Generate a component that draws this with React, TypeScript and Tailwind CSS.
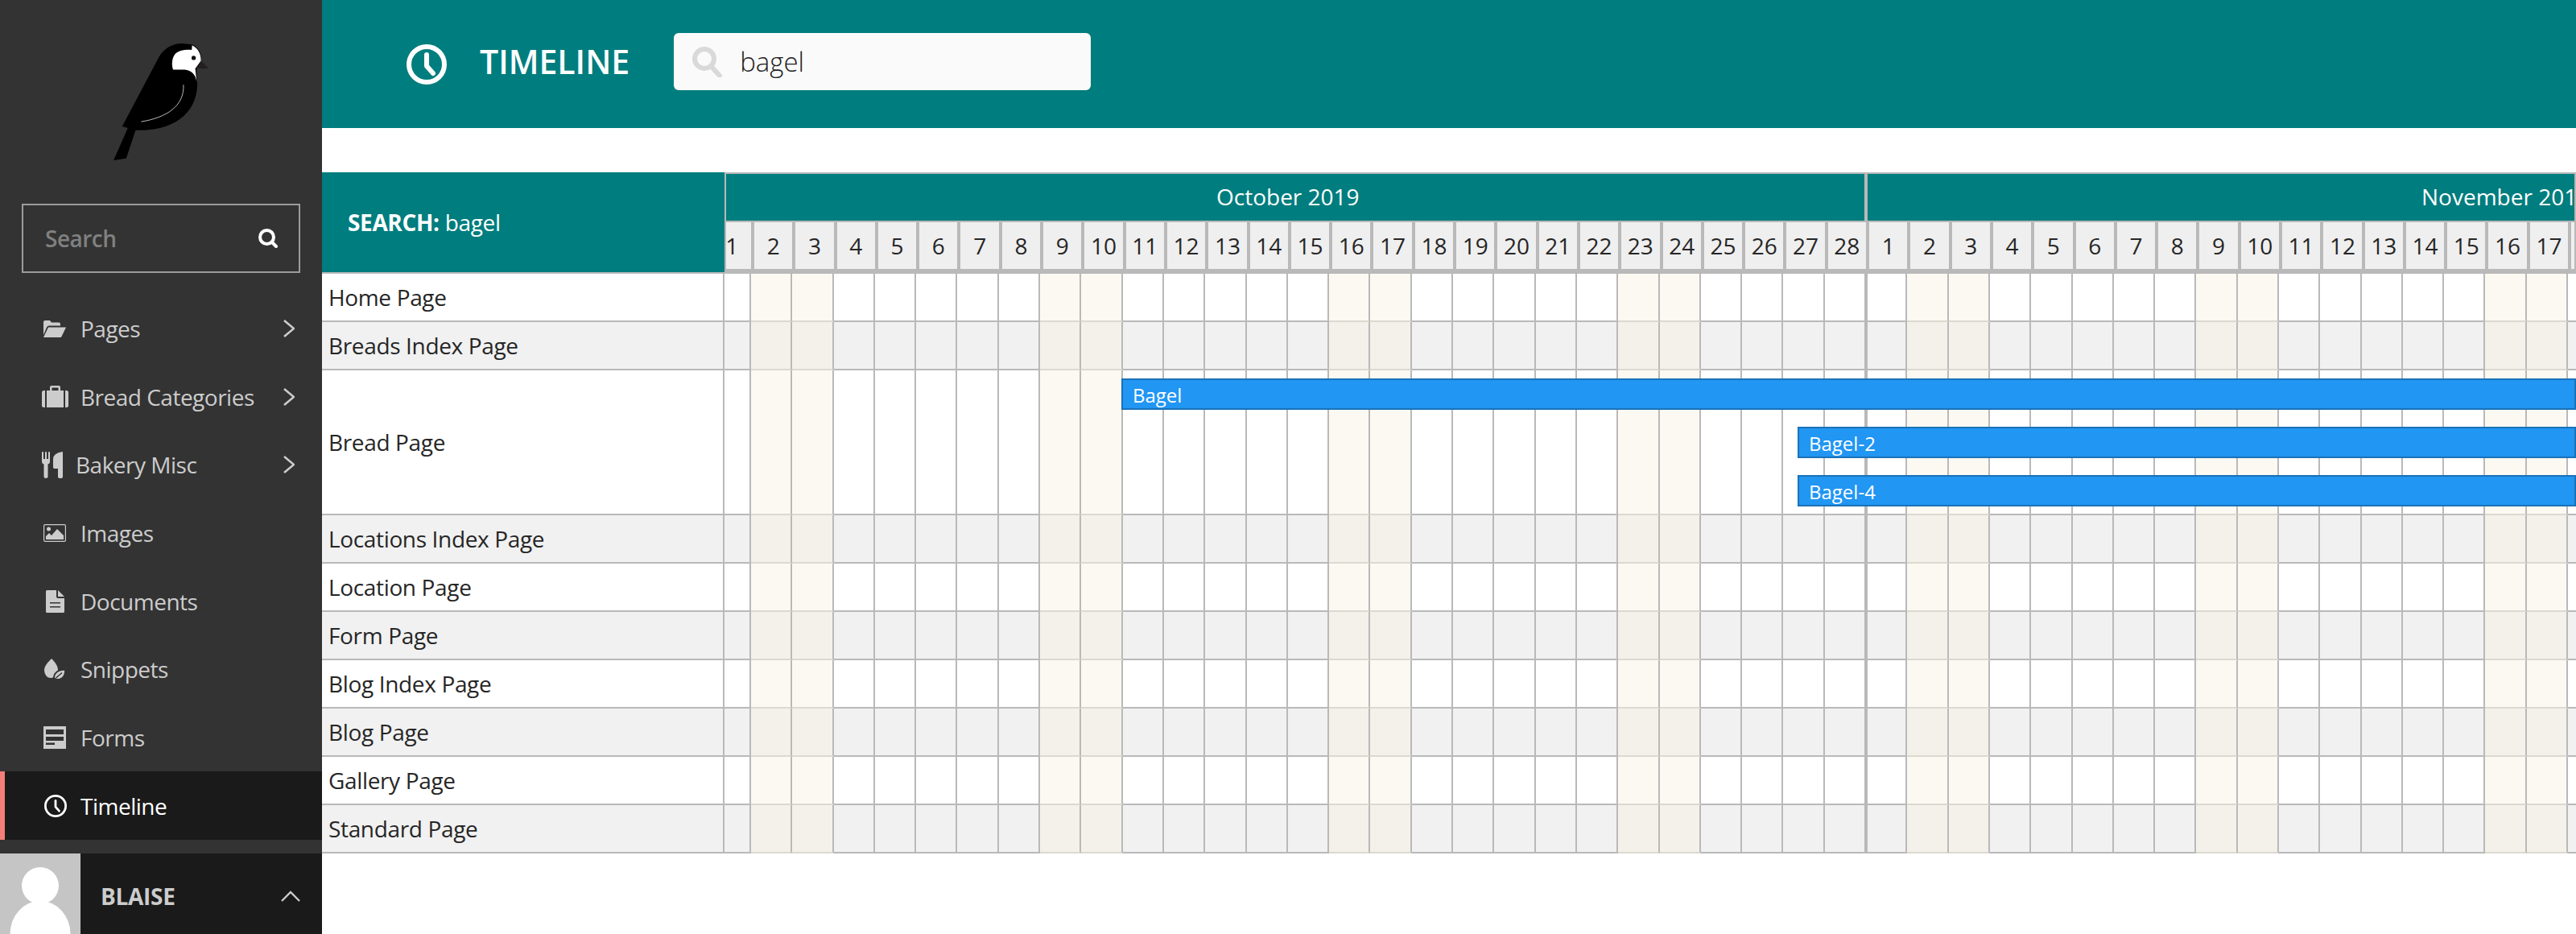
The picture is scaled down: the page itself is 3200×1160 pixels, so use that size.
import React from "react";

const GRAY = "border-[#b9b9b9]";

const oct = Array.from({ length: 28 }, (_, i) => i + 1);
const nov = Array.from({ length: 18 }, (_, i) => i + 1);
const isWeekend = (d: number) => [2, 3, 9, 10, 16, 17, 23, 24].includes(d);
const days = [...oct.map((d) => ({ d, m: 10 })), ...nov.map((d) => ({ d, m: 11 }))];

const rows = [
  { name: "Home Page", h: "h-[60px]" },
  { name: "Breads Index Page", h: "h-[60px]" },
  { name: "Bread Page", h: "h-[180px]" },
  { name: "Locations Index Page", h: "h-[60px]" },
  { name: "Location Page", h: "h-[60px]" },
  { name: "Form Page", h: "h-[60px]" },
  { name: "Blog Index Page", h: "h-[60px]" },
  { name: "Blog Page", h: "h-[60px]" },
  { name: "Gallery Page", h: "h-[60px]" },
  { name: "Standard Page", h: "h-[60px]" },
];

function Bird() {
  return (
    <svg viewBox="420 155 360 445" className="w-[120px] h-[148px] block">
      <path d="M480 468 L423 597 L470 590 L506 482 Z" fill="#000" />
      <path
        d="M455 471 L592 212 C612 178 645 160 680 161 L717 165 C745 178 752 205 750 226 L732 262 L735 300 C742 400 670 490 506 485 Z"
        fill="#000"
      />
      <path
        d="M716 168 C738 178 750 200 749 226 L728 255 L733 302 C728 275 712 261 688 259 L645 259 C638 235 642 210 656 197 C672 184 695 183 715 185 Z"
        fill="#fff"
      />
      <path d="M728 255 L752 229 L778 254 Z" fill="#231f20" />
      <circle cx="722" cy="215" r="8" fill="#111" />
      <path d="M684 315 C688 395 620 438 526 453" fill="none" stroke="#ddd" strokeWidth="2.5" />
    </svg>
  );
}

function FolderIcon() {
  return (
    <svg viewBox="0 0 28 21" className="w-[28px] h-[21px]" fill="#ccc">
      <path d="M0 18 V2 Q0 0 2 0 H8 L10 2.5 H19 Q21 2.5 21 4.5 V6.5 H7 Q5 6.5 4 8.5 Z" />
      <path d="M6 8.5 H28 L22.5 20 Q22 21 21 21 H0 Z" />
    </svg>
  );
}
function CaseIcon() {
  return (
    <svg viewBox="0 0 33 27" className="w-[33px] h-[27px]" fill="#ccc">
      <path d="M4 6 V27 H2.5 Q0 27 0 24.5 V8.5 Q0 6 2.5 6 Z" />
      <path d="M29 6 H30.5 Q33 6 33 8.5 V24.5 Q33 27 30.5 27 H29 Z" />
      <path d="M6 6 H10 V2 Q10 0 12 0 H21 Q23 0 23 2 V6 H27 V27 H6 Z M12.5 2.5 V6 H20.5 V2.5 Z" fillRule="evenodd" />
    </svg>
  );
}
function CutleryIcon() {
  return (
    <svg viewBox="0 0 26 33" className="w-[26px] h-[33px]" fill="#ccc">
      <path d="M0 1 Q0 0 1 0 Q2 0 2 1 V9 H4 V1 Q4 0 5 0 Q6 0 6 1 V9 H8 V1 Q8 0 9 0 Q10 0 10 1 V12 Q10 15 7.5 15.5 V31 Q7.5 33 5 33 Q2.5 33 2.5 31 V15.5 Q0 15 0 12 Z" />
      <path d="M25.5 0 Q26 0 26 1 V31 Q26 33 23 33 Q20 33 20 31 V21 H15.5 Q14 21 14 19 V9 Q14 2 25.5 0 Z" />
    </svg>
  );
}
function ImageIcon() {
  return (
    <svg viewBox="0 0 28 22" className="w-[28px] h-[22px]" fill="#ccc">
      <rect x="0.6" y="0.6" width="26.8" height="20.8" rx="1.5" fill="none" stroke="#ccc" strokeWidth="1.2" />
      <circle cx="6.5" cy="6" r="2.5" />
      <path d="M3 19 V15 L7 11 L10 14 L17 6 L25 14 V19 Z" />
    </svg>
  );
}
function DocIcon() {
  return (
    <svg viewBox="0 0 23 28" className="w-[23px] h-[28px]" fill="#ccc">
      <path
        fillRule="evenodd"
        d="M1.5 0 H13 V8 Q13 10 15 10 H23 V26.5 Q23 28 21.5 28 H1.5 Q0 28 0 26.5 V1.5 Q0 0 1.5 0 Z M5 15 V16.5 H18 V15 Z M5 20 V21.5 H18 V20 Z"
      />
      <path d="M15 0 L23 8 H15 Z" />
    </svg>
  );
}
function LeafIcon() {
  return (
    <svg viewBox="0 0 26 26" className="w-[26px] h-[26px]" fill="#ccc">
      <path d="M9 0 C13 4 17 9 17 14 C17 20 13 24 8 24 C3 24 0 19 0 14 C0 9 5 4 9 0 Z" />
      <path d="M26 13.5 C26.5 21 23 26 16 26 C14 26 13 25 12 24 C12 18 17 13.5 26 13.5 Z" stroke="#333" strokeWidth="1.8" />
      <path d="M14.5 24 L22 17.5" stroke="#333" strokeWidth="1.5" fill="none" />
    </svg>
  );
}
function FormIcon() {
  return (
    <svg viewBox="0 0 28 28" className="w-[28px] h-[28px]" fill="#ccc">
      <path
        fillRule="evenodd"
        d="M0 0 H28 V28 H0 Z M3 4 V10 H25 V4 Z M3 13 V18 H25 V13 Z M3 20.5 V23 H14 V20.5 Z"
      />
    </svg>
  );
}
function ClockIcon({ cls, sw }: { cls: string; sw: number }) {
  return (
    <svg viewBox="0 0 50 50" className={cls} fill="none" stroke="#fff" strokeWidth={sw} strokeLinecap="round" strokeLinejoin="round">
      <circle cx="25" cy="25" r={25 - sw / 2} />
      <path d="M25 13 V27 L33 36" />
    </svg>
  );
}
function Chevron() {
  return (
    <svg viewBox="0 0 14 22" className="w-[14px] h-[22px] ml-auto mr-[34px]" fill="none" stroke="#ccc" strokeWidth="2.6">
      <path d="M1 1 L13 11 L1 21" />
    </svg>
  );
}

const nav = [
  { label: "Pages", icon: <FolderIcon />, box: "w-[28px] ml-[2px] mr-[18px]", chev: true },
  { label: "Bread Categories", icon: <CaseIcon />, box: "w-[33px] mr-[15px]", chev: true },
  { label: "Bakery Misc", icon: <CutleryIcon />, box: "w-[26px] mr-[16px]", chev: true },
  { label: "Images", icon: <ImageIcon />, box: "w-[28px] ml-[2px] mr-[18px]", chev: false },
  { label: "Documents", icon: <DocIcon />, box: "w-[23px] ml-[5px] mr-[20px]", chev: false },
  { label: "Snippets", icon: <LeafIcon />, box: "w-[26px] ml-[3px] mr-[19px]", chev: false },
  { label: "Forms", icon: <FormIcon />, box: "w-[28px] ml-[2px] mr-[18px]", chev: false },
];

function Sidebar() {
  return (
    <aside className="w-[400px] flex-none h-full bg-[#333333] flex flex-col">
      <div className="pt-[52px] pl-[140px]">
        <Bird />
      </div>
      <div className="mt-[53px] mx-[27px] h-[86px] border-2 border-[#9c9c9c] flex items-center pl-[27px] pr-[26px]">
        <span className="text-[28px] font-semibold tracking-[-0.5px] text-[#808080]">Search</span>
        <svg viewBox="0 0 24 24" className="w-[24px] h-[24px] ml-auto" fill="none" stroke="#fff" strokeWidth="4" strokeLinecap="round">
          <circle cx="10.5" cy="10.5" r="8.5" />
          <path d="M17 17 L22 22" />
        </svg>
      </div>
      <nav className="mt-[27px] flex flex-col">
        {nav.map((n) => (
          <div key={n.label} className="h-[84.6px] flex items-center pl-[52px] text-[28px] tracking-[-0.5px] text-[#cccccc]">
            <span className={`flex-none flex justify-center ${n.box}`}>{n.icon}</span>
            <span>{n.label}</span>
            {n.chev && <Chevron />}
          </div>
        ))}
        <div className="h-[85px] flex items-center pl-[49px] border-l-[6px] border-[#f37e77] bg-[#1a1a1a] text-[28px] tracking-[-0.5px] text-white">
          <ClockIcon cls="w-[28px] h-[28px] mr-[17px]" sw={5} />
          <span>Timeline</span>
        </div>
      </nav>
      <div className="mt-auto h-[100px] bg-[#1a1a1a] flex items-center">
        <svg viewBox="0 0 100 100" className="w-[100px] h-[100px] flex-none bg-[#c5c5c5]" fill="#fff">
          <circle cx="50" cy="40" r="23" />
          <ellipse cx="50" cy="100" rx="37.5" ry="41" />
        </svg>
        <span className="ml-[25px] mt-[5px] text-[28px] font-bold tracking-[-0.3px] text-[#cccccc]">BLAISE</span>
        <svg viewBox="0 0 24 14" className="w-[24px] h-[14px] ml-auto mr-[27px] mt-[6px]" fill="none" stroke="#ccc" strokeWidth="2.4">
          <path d="M1 13 L12 2 L23 13" />
        </svg>
      </div>
    </aside>
  );
}

function TopBar() {
  return (
    <header className="h-[159px] bg-[#007d7e] flex items-center pl-[105px]">
      <ClockIcon cls="w-[50px] h-[50px] flex-none mt-[1px]" sw={6} />
      <h1 className="ml-[41px] mb-[6px] text-[41px] font-semibold text-white leading-none">TIMELINE</h1>
      <div className="ml-[55px] mb-[6px] w-[518px] h-[71px] rounded-[6px] bg-[#fafafa] flex items-center pl-[23px]">
        <svg viewBox="0 0 38 38" className="w-[38px] h-[38px] flex-none" fill="none" stroke="#d9d9d9" strokeWidth="6" strokeLinecap="round">
          <circle cx="15" cy="15" r="12" />
          <path d="M24 25 L34 36" />
        </svg>
        <span className="ml-[21px] text-[33px] font-light text-[#1f1f1f] leading-none">bagel</span>
      </div>
    </header>
  );
}

function TimelineHead() {
  return (
    <div className={`flex-1 min-w-0 overflow-hidden border-l-2 border-t-2 border-r-2 ${GRAY} bg-[#b9b9b9]`}>
      <div className="flex h-[60px] border-b-2 border-[#b9b9b9] text-[28px] text-white">
        <div className="w-[1418px] flex-none bg-[#007d7e] border-r-4 border-[#b9b9b9] pl-[609px] pb-[2px] flex items-center whitespace-nowrap">
          October 2019
        </div>
        <div className="flex-1 min-w-0 bg-[#007d7e] pl-[688px] pb-[2px] flex items-center whitespace-nowrap overflow-hidden">
          November 2019
        </div>
      </div>
      <div className="flex h-[64px] ml-[-16.3px] border-b-[6px] border-[#b9b9b9] text-[28px] text-[#262626]">
        {days.map(({ d, m }) => (
          <div key={`${m}-${d}`} className="w-[51.3px] flex-none bg-[#efefef] border-r-4 border-[#b9b9b9] flex items-center justify-center">
            {d}
          </div>
        ))}
      </div>
    </div>
  );
}

function Bar({ label, cls }: { label: string; cls: string }) {
  return (
    <div className={`absolute right-0 h-[39px] bg-[#2196f3] border-2 border-[#1a72b8] pl-[12px] pt-[2px] flex items-center text-[24px] text-white ${cls}`}>
      {label}
    </div>
  );
}

function Row({ name, h, even }: { name: string; h: string; even: boolean }) {
  const base = even ? "bg-[#f1f1f1]" : "bg-white";
  const wk = even ? "bg-[#f3f1ea]" : "bg-[#fbf9f2]";
  return (
    <div className={`relative flex ${h} ${base}`}>
      <div className={`w-[500px] flex-none pl-[8px] flex items-center border-r-2 border-b-2 ${GRAY} text-[28px] tracking-[-0.35px] text-[#262626]`}>
        {name}
      </div>
      <div className="flex-1 min-w-0 overflow-hidden">
        <div className="flex h-full ml-[-18.3px]">
          {days.map(({ d, m }) => {
            const w = m === 10 ? isWeekend(d) : [2, 3, 9, 10, 16, 17].includes(d);
            return (
              <div
                key={`${m}-${d}`}
                className={`w-[51.3px] flex-none border-r-2 border-r-[#b9b9b9] border-b-2 ${
                  w ? `${wk} border-b-[#dcd9d0]` : "border-b-[#b9b9b9]"
                } ${m === 11 && d === 1 ? "border-l-2 border-l-[#b9b9b9]" : ""}`}
              />
            );
          })}
        </div>
      </div>
      {name === "Bread Page" && (
        <>
          <Bar label="Bagel" cls="left-[993px] top-[10px]" />
          <Bar label="Bagel-2" cls="left-[1833px] top-[70px]" />
          <Bar label="Bagel-4" cls="left-[1833px] top-[130px]" />
        </>
      )}
    </div>
  );
}

export default function App() {
  return (
    <div className="w-[3200px] h-[1160px] flex overflow-hidden bg-white font-['Open_Sans',sans-serif]">
      <Sidebar />
      <main className="flex-1 min-w-0 overflow-hidden">
        <TopBar />
        <section className="mt-[55px]">
          <div className="flex h-[126px]">
            <div className="w-[500px] flex-none h-full bg-[#007d7e] border-b-2 border-[#b9b9b9] pl-[32px] flex items-center text-[28px] tracking-[-0.35px] text-white">
              <span className="font-bold">SEARCH:</span>
              <span className="ml-[7px]">bagel</span>
            </div>
            <TimelineHead />
          </div>
          {rows.map((r, i) => (
            <Row key={r.name} name={r.name} h={r.h} even={i % 2 === 1} />
          ))}
        </section>
      </main>
    </div>
  );
}
